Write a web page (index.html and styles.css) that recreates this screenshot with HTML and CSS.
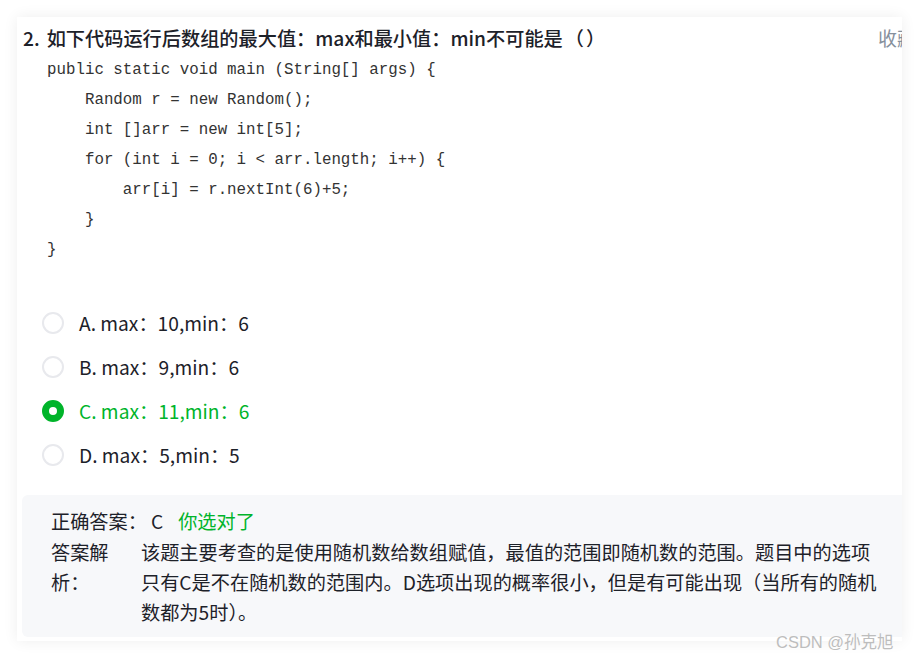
FILE: index.html
```html
<!DOCTYPE html>
<html lang="zh-CN">
<head>
<meta charset="utf-8">
<title>题目</title>
<link rel="stylesheet" href="styles.css">
</head>
<body>
<div class="card">
  <div class="inner">
    <div class="title-row">
      <div class="title"><span class="num">2.</span>如下代码运行后数组的最大值：max和最小值：min不可能是<span class="paren">（）</span></div>
      <div class="fav">收藏</div>
    </div>
<pre class="code">public static void main (String[] args) {
    Random r = new Random();
    int []arr = new int[5];
    for (int i = 0; i &lt; arr.length; i++) {
        arr[i] = r.nextInt(6)+5;
    }
}</pre>
    <ul class="options">
      <li class="option"><span class="radio"></span><span class="opt-text">A. max：10,min：6</span></li>
      <li class="option"><span class="radio"></span><span class="opt-text">B. max：9,min：6</span></li>
      <li class="option checked"><span class="radio"></span><span class="opt-text">C. max：11,min：6</span></li>
      <li class="option"><span class="radio"></span><span class="opt-text">D. max：5,min：5</span></li>
    </ul>
    <div class="analysis">
      <div class="answer-row">
        <span class="label-inline">正确答案：</span>
        <span class="answer">C</span>
        <span class="right">你选对了</span>
      </div>
      <div class="explain-row">
        <div class="explain-label">答案解析：</div>
        <div class="explain-text">该题主要考查的是使用随机数给数组赋值，最值的范围即随机数的范围。题目中的选项只有C是不在随机数的范围内。D选项出现的概率很小，但是有可能出现（当所有的随机数都为5时）。</div>
      </div>
    </div>
  </div>
</div>
<div class="watermark">CSDN @孙克旭</div>
</body>
</html>
```

FILE: styles.css
```css
html, body {
  margin: 0;
  padding: 0;
  background: #ffffff;
}

body {
  font-family: "Noto Sans CJK SC", "Noto Sans", sans-serif;
  color: #1d2129;
  width: 919px;
  height: 658px;
  overflow: hidden;
  position: relative;
}

.card {
  margin: 17px 0 0 17px;
  width: 885px;
  height: 624px;
  background: #ffffff;
  box-shadow: 0 0 14px rgba(0, 0, 0, 0.07);
  overflow: hidden;
  box-sizing: border-box;
  padding: 6px 0 0 5px;
}

.inner {
  width: 894px;
}

.title-row {
  display: flex;
  justify-content: space-between;
  align-items: center;
  height: 30px;
}

.title {
  font-size: 19.2px;
  line-height: 30px;
  font-weight: 500;
  color: #1d2129;
  white-space: nowrap;
  padding-left: 1px;
}

.num {
  margin-right: 7px;
}

.paren {
  letter-spacing: 2px;
  margin-left: 2px;
}

.fav {
  font-size: 19px;
  line-height: 30px;
  color: #86909c;
  white-space: nowrap;
}

.code {
  margin: 2px 0 0 0;
  padding-left: 25px;
  font-family: "Liberation Mono", "DejaVu Sans Mono", monospace;
  font-size: 15.8px;
  line-height: 30px;
  color: #333333;
  white-space: pre;
}

.options {
  list-style: none;
  margin: 36px 0 0 0;
  padding: 0 0 0 20px;
}

.option {
  display: flex;
  align-items: center;
  height: 44px;
}

.radio {
  width: 22px;
  height: 22px;
  box-sizing: border-box;
  border: 2px solid #e8e9ed;
  border-radius: 50%;
  background: #ffffff;
  flex: none;
}

.opt-text {
  margin-left: 15px;
  font-size: 19.2px;
  line-height: 30px;
  color: #1d2129;
}

.option.checked .radio {
  border: 7px solid #00b42a;
  background: #ffffff;
}

.option.checked .opt-text {
  color: #00b42a;
}

.analysis {
  margin-top: 18px;
  background: #f7f8fa;
  border-radius: 6px;
  height: 142px;
  box-sizing: border-box;
  padding: 11px 0 0 29px;
  font-size: 19.2px;
  line-height: 30px;
}

.answer-row {
  display: flex;
  align-items: center;
  height: 30px;
}

.label-inline {
  color: #1d2129;
}

.answer {
  margin-left: 4px;
  color: #1d2129;
}

.right {
  margin-left: 15px;
  color: #00b42a;
}

.explain-row {
  display: flex;
  margin-top: 1px;
}

.explain-label {
  width: 72px;
  flex: none;
  color: #1d2129;
}

.explain-text {
  margin-left: 18px;
  width: 742px;
  color: #1d2129;
}

.watermark {
  position: absolute;
  left: 776px;
  top: 630px;
  font-family: "Liberation Sans", "Noto Sans CJK SC", sans-serif;
  font-size: 16.5px;
  line-height: 24px;
  color: #bdbdbd;
  text-shadow: 0 0 1px rgba(255, 255, 255, 0.9);
  white-space: nowrap;
}
```
